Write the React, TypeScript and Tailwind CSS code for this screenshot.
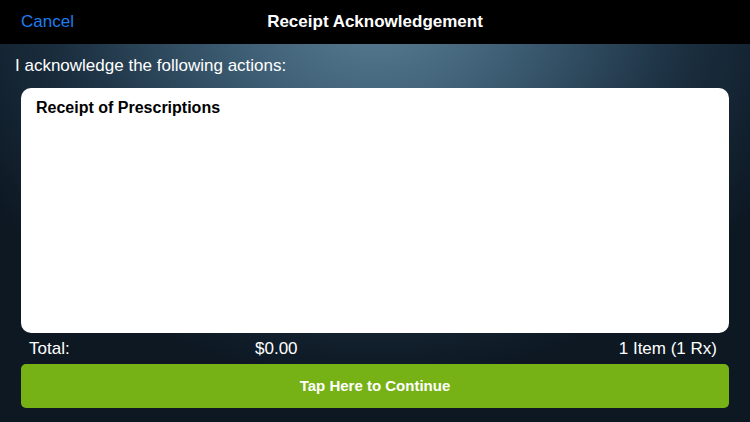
export default function App() {
  return (
    <div
      className="w-[750px] h-[422px] flex flex-col overflow-hidden bg-[radial-gradient(ellipse_60%_90%_at_50%_0%,#5d8199_0%,#3b5b71_35%,#1b2f40_70%,#0d1823_100%)]"
      style={{ fontFamily: '"Liberation Sans", Arial, sans-serif' }}
    >
      <div className="h-[44px] bg-black flex items-center relative shrink-0">
        <span className="absolute left-[21px] text-[17px] text-[#1f7cf0]">Cancel</span>
        <div className="flex-1 text-center text-white text-[17px] font-semibold">Receipt Acknowledgement</div>
      </div>
      <div className="h-[44px] flex items-center pl-[15px] text-white text-[17px] shrink-0">
        I acknowledge the following actions:
      </div>
      <div className="mx-[21px] h-[245px] bg-white rounded-[10px] px-[15px] pt-[8px] shrink-0">
        <div className="text-[16px] font-bold text-black">Receipt of Prescriptions</div>
      </div>
      <div className="h-[31px] flex items-center pl-[29px] pr-[33px] text-white text-[17px] shrink-0">
        <span className="w-[226px]">Total:</span>
        <span>$0.00</span>
        <span className="flex-1 text-right">1 Item (1 Rx)</span>
      </div>
      <div className="mx-[21px] h-[44px] bg-[#76b216] rounded-[5px] flex items-center justify-center text-white text-[15px] font-semibold shrink-0">
        Tap Here to Continue
      </div>
    </div>
  );
}
